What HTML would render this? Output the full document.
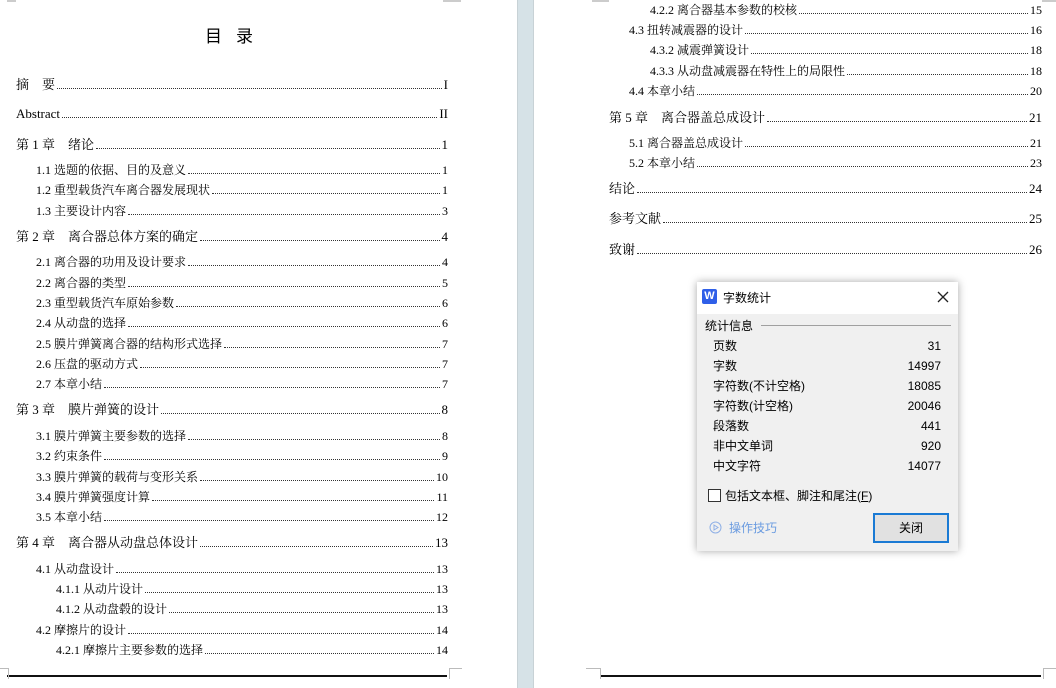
<!DOCTYPE html>
<html><head><meta charset="utf-8"><style>
body{margin:0;width:1056px;height:688px;background:#fff;position:relative;overflow:hidden;font-family:"Liberation Serif","Noto Serif CJK SC","Noto Sans CJK SC",serif;color:#000}
.r{position:absolute;display:flex;align-items:flex-end;height:16px;line-height:16px;white-space:nowrap}
.r .d{flex:1;border-bottom:1px dotted #333;margin:0 2px 4px 2px}
.c{font-size:13px}.s{font-size:12px}
.band{position:absolute;left:517px;top:0;width:15px;height:688px;background:#d6e2e7;border-left:1px solid #c8d2d6;border-right:1px solid #c8d2d6}
.hl{position:absolute;height:2px;background:#111}
.cm{position:absolute;border-color:#bbb;border-style:solid;width:17px;height:10px}
.dlg{position:absolute;left:697px;top:282px;width:261px;height:269px;background:#f0f0f0;box-shadow:0 0 8px rgba(0,0,0,.35);font-family:"Liberation Sans","Noto Sans CJK SC",sans-serif;font-size:12px}
.tt{height:32px;background:#fff;position:relative}
.st,.sv{position:absolute;font-size:12px;line-height:18px;height:18px}
.sv{right:17px}
</style></head><body>
<div class="band"></div>
<div style="position:absolute;left:205px;top:22px;font-size:17px;font-family:'Noto Sans CJK SC',sans-serif;letter-spacing:14px">目录</div>

<div class="r c" style="left:16px;width:432px;top:77px">摘　要<span class="d"></span>I</div>
<div class="r c" style="left:16px;width:432px;top:106px">Abstract<span class="d"></span>II</div>
<div class="r c" style="left:16px;width:432px;top:137px">第 1 章　绪论<span class="d"></span>1</div>
<div class="r s" style="left:36px;width:412px;top:162px">1.1 选题的依据、目的及意义<span class="d"></span>1</div>
<div class="r s" style="left:36px;width:412px;top:182px">1.2 重型载货汽车离合器发展现状<span class="d"></span>1</div>
<div class="r s" style="left:36px;width:412px;top:203px">1.3 主要设计内容<span class="d"></span>3</div>
<div class="r c" style="left:16px;width:432px;top:229px">第 2 章　离合器总体方案的确定<span class="d"></span>4</div>
<div class="r s" style="left:36px;width:412px;top:254px">2.1 离合器的功用及设计要求<span class="d"></span>4</div>
<div class="r s" style="left:36px;width:412px;top:275px">2.2 离合器的类型<span class="d"></span>5</div>
<div class="r s" style="left:36px;width:412px;top:295px">2.3 重型载货汽车原始参数<span class="d"></span>6</div>
<div class="r s" style="left:36px;width:412px;top:315px">2.4 从动盘的选择<span class="d"></span>6</div>
<div class="r s" style="left:36px;width:412px;top:336px">2.5 膜片弹簧离合器的结构形式选择<span class="d"></span>7</div>
<div class="r s" style="left:36px;width:412px;top:356px">2.6 压盘的驱动方式<span class="d"></span>7</div>
<div class="r s" style="left:36px;width:412px;top:376px">2.7 本章小结<span class="d"></span>7</div>
<div class="r c" style="left:16px;width:432px;top:402px">第 3 章　膜片弹簧的设计<span class="d"></span>8</div>
<div class="r s" style="left:36px;width:412px;top:428px">3.1 膜片弹簧主要参数的选择<span class="d"></span>8</div>
<div class="r s" style="left:36px;width:412px;top:448px">3.2 约束条件<span class="d"></span>9</div>
<div class="r s" style="left:36px;width:412px;top:469px">3.3 膜片弹簧的载荷与变形关系<span class="d"></span>10</div>
<div class="r s" style="left:36px;width:412px;top:489px">3.4 膜片弹簧强度计算<span class="d"></span>11</div>
<div class="r s" style="left:36px;width:412px;top:509px">3.5 本章小结<span class="d"></span>12</div>
<div class="r c" style="left:16px;width:432px;top:535px">第 4 章　离合器从动盘总体设计<span class="d"></span>13</div>
<div class="r s" style="left:36px;width:412px;top:561px">4.1 从动盘设计<span class="d"></span>13</div>
<div class="r s" style="left:56px;width:392px;top:581px">4.1.1 从动片设计<span class="d"></span>13</div>
<div class="r s" style="left:56px;width:392px;top:601px">4.1.2 从动盘毂的设计<span class="d"></span>13</div>
<div class="r s" style="left:36px;width:412px;top:622px">4.2 摩擦片的设计<span class="d"></span>14</div>
<div class="r s" style="left:56px;width:392px;top:642px">4.2.1 摩擦片主要参数的选择<span class="d"></span>14</div>

<div class="r s" style="left:650px;width:392px;top:2px">4.2.2 离合器基本参数的校核<span class="d"></span>15</div>
<div class="r s" style="left:629px;width:413px;top:22px">4.3 扭转减震器的设计<span class="d"></span>16</div>
<div class="r s" style="left:650px;width:392px;top:42px">4.3.2 减震弹簧设计<span class="d"></span>18</div>
<div class="r s" style="left:650px;width:392px;top:63px">4.3.3 从动盘减震器在特性上的局限性<span class="d"></span>18</div>
<div class="r s" style="left:629px;width:413px;top:83px">4.4 本章小结<span class="d"></span>20</div>
<div class="r c" style="left:609px;width:433px;top:110px">第 5 章　离合器盖总成设计<span class="d"></span>21</div>
<div class="r s" style="left:629px;width:413px;top:135px">5.1 离合器盖总成设计<span class="d"></span>21</div>
<div class="r s" style="left:629px;width:413px;top:155px">5.2 本章小结<span class="d"></span>23</div>
<div class="r c" style="left:609px;width:433px;top:181px">结论<span class="d"></span>24</div>
<div class="r c" style="left:609px;width:433px;top:211px">参考文献<span class="d"></span>25</div>
<div class="r c" style="left:609px;width:433px;top:242px">致谢<span class="d"></span>26</div>

<div class="hl" style="left:7px;top:675px;width:440px"></div>
<div class="hl" style="left:601px;top:675px;width:440px"></div>
<div class="cm" style="left:0;top:668px;border-width:1px 1px 0 0;width:8px"></div>
<div class="cm" style="left:449px;top:668px;border-width:1px 0 0 1px;width:12px"></div>
<div class="cm" style="left:586px;top:668px;border-width:1px 1px 0 0;width:14px"></div>
<div class="cm" style="left:1043px;top:668px;border-width:1px 0 0 1px;width:13px"></div>
<div style="position:absolute;left:7px;top:0;width:9px;height:2px;background:#ccc"></div>
<div style="position:absolute;left:443px;top:0;width:18px;height:2px;background:#ccc"></div>
<div style="position:absolute;left:592px;top:0;width:17px;height:2px;background:#ccc"></div>
<div style="position:absolute;left:1042px;top:0;width:14px;height:2px;background:#ccc"></div>

<div class="dlg">
 <div class="tt">
  <div style="position:absolute;left:5px;top:7px;width:15px;height:15px;background:#2f5fe8;border-radius:2px;color:#fff;font-weight:bold;font-size:11px;text-align:center;line-height:15px">W</div>
  <div style="position:absolute;left:26px;top:7px;font-size:12px">字数统计</div>
  <svg style="position:absolute;left:240px;top:9px" width="12" height="12"><path d="M1 1L11 11M11 1L1 11" stroke="#222" stroke-width="1.3"/></svg>
 </div>
 <div style="position:absolute;left:8px;top:35px">统计信息</div>
 <div style="position:absolute;left:64px;top:43px;width:190px;height:1px;background:#a0a0a0"></div>
 <div class="st" style="left:16px;top:55px">页数</div><div class="sv" style="top:55px">31</div>
 <div class="st" style="left:16px;top:75px">字数</div><div class="sv" style="top:75px">14997</div>
 <div class="st" style="left:16px;top:95px">字符数(不计空格)</div><div class="sv" style="top:95px">18085</div>
 <div class="st" style="left:16px;top:115px">字符数(计空格)</div><div class="sv" style="top:115px">20046</div>
 <div class="st" style="left:16px;top:135px">段落数</div><div class="sv" style="top:135px">441</div>
 <div class="st" style="left:16px;top:155px">非中文单词</div><div class="sv" style="top:155px">920</div>
 <div class="st" style="left:16px;top:175px">中文字符</div><div class="sv" style="top:175px">14077</div>
 <div style="position:absolute;left:11px;top:207px;width:11px;height:11px;border:1px solid #333;background:#fff"></div>
 <div style="position:absolute;left:28px;top:205px">包括文本框、脚注和尾注(<u>F</u>)</div>
 <svg style="position:absolute;left:12px;top:239px" width="13" height="13"><circle cx="6.5" cy="6.5" r="5.5" fill="none" stroke="#8fb0e6"/><path d="M5 4L9 6.5L5 9Z" fill="none" stroke="#8fb0e6"/></svg>
 <div style="position:absolute;left:32px;top:237px;color:#6a9be0">操作技巧</div>
 <div style="position:absolute;left:176px;top:231px;width:72px;height:26px;border:2px solid #1a7ad4;background:#e1e1e1;text-align:center;line-height:26px">关闭</div>
</div>
</body></html>
